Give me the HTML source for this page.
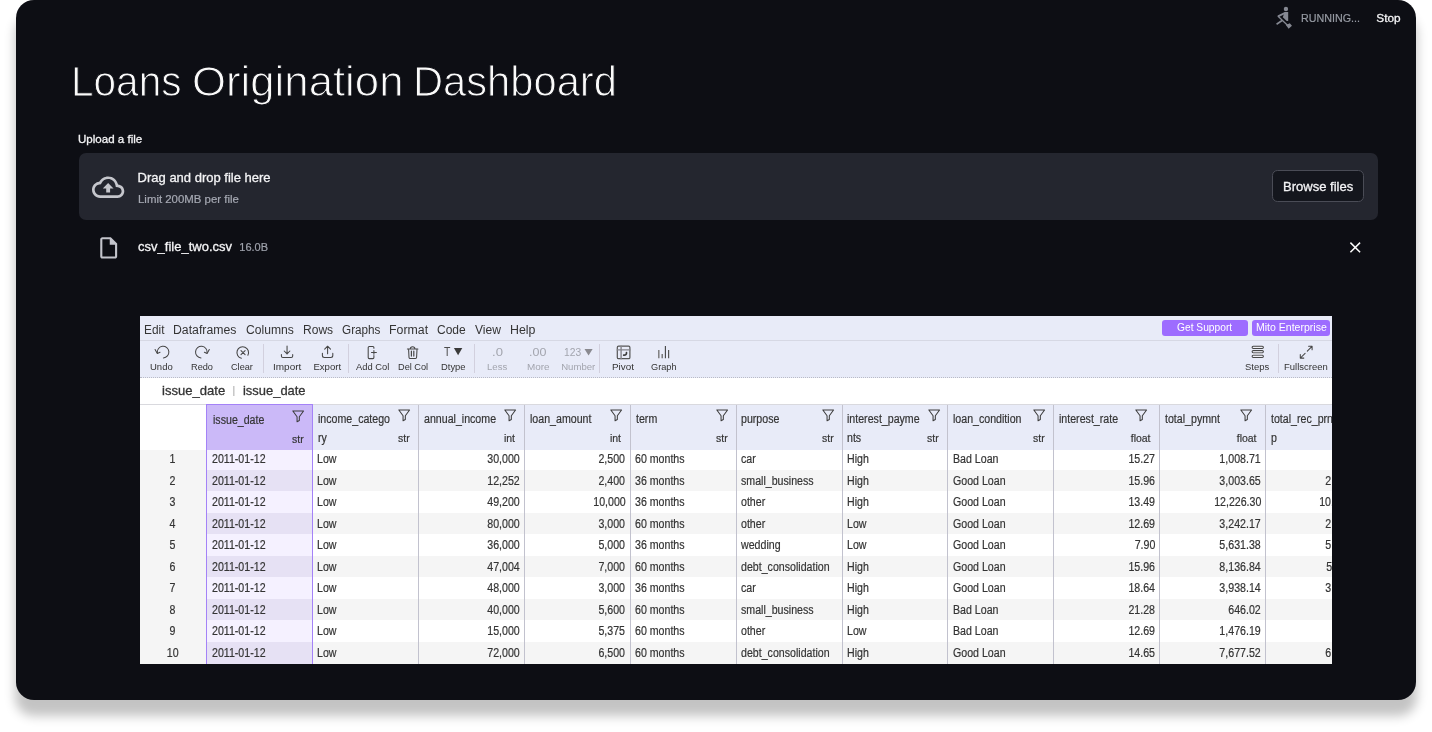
<!DOCTYPE html>
<html lang="en">
<head>
<meta charset="utf-8">
<title>Loans Origination Dashboard</title>
<style>
*{box-sizing:border-box}
html,body{margin:0;padding:0}
body{width:1432px;height:732px;background:#fff;position:relative;overflow:hidden;font-family:"Liberation Sans",sans-serif;color:#fafafa}
.card{position:absolute;left:16px;top:0;width:1400px;height:699.6px;background:#0d0e14;border-radius:18px;box-shadow:0 15.5px 11px .5px rgba(0,0,0,.235)}
.root{position:absolute;left:0;top:0;width:1432px;height:732px;will-change:transform}
.abs{position:absolute;white-space:nowrap}
h1{position:absolute;left:0;margin:0;padding:0;font-weight:400;font-size:42.6px;line-height:55px;white-space:nowrap;color:#fafafa;-webkit-text-stroke:1px #0d0e14}
h1 span{display:inline-block;transform-origin:0 50%}
.t{position:absolute;white-space:nowrap;margin:0;padding:0;transform-origin:0 50%}
.drop{position:absolute;left:79px;top:153.2px;width:1298.8px;height:67.3px;background:#24262f;border-radius:7px}
.btn{position:absolute;left:1272.2px;top:170.4px;width:91.8px;height:32px;border:1px solid #4a4c56;border-radius:5.5px;background:#14161d}

/* mito */
.mito{position:absolute;left:140px;top:316px;width:1192px;height:348px;background:#fff;overflow:hidden;color:#343434}
.hn,.hn2,.ht,.c,.ix{-webkit-text-stroke:.2px #343434}
.menubar{position:absolute;left:0;top:0;width:100%;height:25px;background:#e8ebf8;border-bottom:1px solid #d6d8e4}
.pill{position:absolute;top:4px;height:15.5px;border-radius:3px;background:#9d6cff}
.toolbar{position:absolute;left:0;top:25px;width:100%;height:37px;background:#e8ebf8;border-bottom:1px dotted #b9bbc6}
.ic{position:absolute;overflow:visible}
.sep{position:absolute;top:28.4px;width:1px;height:29px;background:#d2d0de}
.fbar{position:absolute;left:0;top:62px;width:100%;height:27px;background:#fff;border-bottom:1px solid #d9d9de}
.hc{position:absolute;top:88.7px;height:45.1px;background:#e8ebf8;overflow:hidden;z-index:2}
.hcb{position:absolute;left:0;top:88.7px;width:66.6px;height:45.1px;background:#fff;z-index:2}
.hc.sel{background:#cbb9f8}
.hn,.hn2,.ht{position:absolute;font-size:12px;line-height:16px;color:#343434;white-space:nowrap;transform:scaleX(.885)}
.hn{left:5.4px;top:6.3px;transform-origin:0 50%}
.hn2{left:5.4px;top:25.4px;transform-origin:0 50%}
.ht{right:8.8px;top:25.2px;font-size:11.4px;transform:scaleX(.92);transform-origin:100% 50%}
.flt{position:absolute;right:8px;top:4.1px;width:12.4px;height:12.4px;overflow:visible}
.flt.f{right:12.8px}
.hc.sel .hn,.hc.sel .ht,.hc.sel .flt{margin-top:1px}
.hc.sel .hn{margin-left:.9px}
.row{position:absolute;left:0;width:100%;overflow:hidden}
.row.odd{background:#fff}
.row.even{background:#f5f5f5}
.ixb{position:absolute;left:0;top:0;width:66.6px;height:100%;background:#f5f5f5}
.cselb{position:absolute;top:0;height:100%}
.ix{position:absolute;left:0;width:66.6px;height:14px;text-align:center;font-size:12px;line-height:14px;color:#343434;padding-right:2px}
.c{position:absolute;height:14px;font-size:12px;line-height:14px;color:#343434;white-space:nowrap;overflow:hidden}
.c span,.ix span{display:inline-block;transform:scaleX(.885)}
.c.l{text-align:left;padding-left:4.8px}
.c.s1{padding-left:5.6px}
.c.l span{transform-origin:0 50%}
.c.r{text-align:right;padding-right:4.7px}
.c.r span{transform-origin:100% 50%}
.row.odd .cselb{background:#f5f1ff}
.row.even .cselb{background:#e6e1f4}
.vb{position:absolute;top:88.7px;width:1px;height:260px;background:#c2c2ce;z-index:3}
.selb{z-index:4;position:absolute;left:66.2px;top:88.4px;width:106.7px;height:261px;border:1.5px solid #a482f7;border-bottom:0}
</style>
</head>
<body>
<div class="root">
<div class="card"></div>

<!-- status -->
<svg class="abs" style="left:1268px;top:2px" width="32" height="32" viewBox="0 0 732 732"><g fill="#858892" stroke="#858892" stroke-linecap="butt"><circle cx="410" cy="160" r="50" stroke="none"/><path d="M383 228H462V436H428L338 350Z" stroke="none"/><path d="M392 250L228 328" stroke-width="42" fill="none"/><path d="M225 322L470 556" stroke-width="30" fill="none"/><path d="M410 528L498 488L548 542L472 614Z" stroke="none"/><path d="M196 508L322 424" stroke-width="38" fill="none"/></g></svg>

<div class="drop"></div>
<svg class="abs" style="left:92.3px;top:170.7px" width="32.3" height="32.3" viewBox="0 0 24 24"><path fill="#c5c6cc" d="M19.35 10.04C18.67 6.59 15.64 4 12 4 9.11 4 6.6 5.64 5.35 8.04 2.34 8.36 0 10.91 0 14c0 3.310 2.690 6 6 6h13c2.760 0 5-2.240 5-5 0-2.640-2.050-4.780-4.650-4.960zM19 18H6c-2.210 0-4-1.790-4-4 0-2.050 1.530-3.760 3.560-3.970l1.070-.11.5-.95C8.080 7.140 9.940 6 12 6c2.620 0 4.880 1.860 5.390 4.430l.3 1.500 1.530.11c1.560.1 2.780 1.410 2.780 2.960 0 1.650-1.350 3-3 3zM8 13h2.550v3h2.900v-3H16l-4-4z"/></svg>
<div class="btn"></div>
<h1 style="top:54px"><span style="margin-left:71.23px;transform:scaleX(0.9523)">Loans</span> <span style="margin-left:-7.38px;transform:scaleX(1.0267)">Origination</span> <span style="margin-left:3.55px;transform:scaleX(0.9784)">Dashboard</span></h1>
<div class="t" style="left:78.09px;top:132px;font-size:11.4px;line-height:15px;transform:scaleX(1.0139);color:#f4f4f6;-webkit-text-stroke:.3px #f4f4f6">Upload a file</div>
<div class="t" style="left:137.60px;top:169px;font-size:13px;line-height:17px;color:#f4f4f6;-webkit-text-stroke:.3px #f4f4f6">Drag and drop file here</div>
<div class="t" style="left:137.71px;top:191px;font-size:11.6px;line-height:15px;transform:scaleX(0.9846);color:#a6a9b3;-webkit-text-stroke:.2px #a6a9b3">Limit 200MB per file</div>
<div class="t" style="left:1282.72px;top:178px;font-size:13.3px;line-height:17px;transform:scaleX(0.9794);color:#f4f4f6;-webkit-text-stroke:.3px #f4f4f6">Browse files</div>
<div class="t" style="left:138.10px;top:238px;font-size:13px;line-height:17px;color:#f4f4f6;-webkit-text-stroke:.3px #f4f4f6">csv_file_two.csv</div>
<div class="t" style="left:239.30px;top:240px;font-size:11px;line-height:14px;color:#9ea1ab;-webkit-text-stroke:.2px #9ea1ab">16.0B</div>
<div class="t" style="left:1300.88px;top:11px;font-size:11.8px;line-height:15px;transform:scaleX(0.9092);color:#969aa3;-webkit-text-stroke:.2px #969aa3">RUNNING...</div>
<div class="t" style="left:1376.30px;top:11px;font-size:11.8px;line-height:15px;color:#f4f4f6;-webkit-text-stroke:.3px #f4f4f6">Stop</div>

<svg class="abs" style="left:95.6px;top:235.100px" width="25.400" height="25.700" viewBox="0 0 24 24" preserveAspectRatio="none"><path fill="#c3c4cb" d="M14 2H6c-1.100 0-1.990.9-1.990 2L4 20c0 1.100.89 2 1.990 2H18c1.100 0 2-.9 2-2V8l-6-6zM6 20V4h7v5h5v11H6z"/></svg>
<svg class="abs" style="left:1349px;top:241.200px" width="12.6" height="12.6" viewBox="0 0 12.6 12.6"><path d="M1.400 1.600l9.700 9.700M11.100 1.600l-9.700 9.700" stroke="#fafafa" stroke-width="1.500" fill="none"/></svg>

<div class="mito">
<div class="menubar"></div>
<div class="pill" style="left:1021.7px;width:86px"></div>
<div class="pill" style="left:1111.8px;width:78.4px"></div>
<div class="toolbar"></div>
<div class="fbar"></div>
<div class="t" style="left:3.55px;top:6px;font-size:12.5px;line-height:16px;transform:scaleX(0.9479);color:#343434;">Edit</div>
<div class="t" style="left:33.22px;top:6px;font-size:12.5px;line-height:16px;transform:scaleX(0.9817);color:#343434;">Dataframes</div>
<div class="t" style="left:105.72px;top:6px;font-size:12.5px;line-height:16px;transform:scaleX(0.9695);color:#343434;">Columns</div>
<div class="t" style="left:162.64px;top:6px;font-size:12.5px;line-height:16px;transform:scaleX(0.9629);color:#343434;">Rows</div>
<div class="t" style="left:202.14px;top:6px;font-size:12.5px;line-height:16px;transform:scaleX(0.9389);color:#343434;">Graphs</div>
<div class="t" style="left:249.21px;top:6px;font-size:12.5px;line-height:16px;transform:scaleX(0.9866);color:#343434;">Format</div>
<div class="t" style="left:297.42px;top:6px;font-size:12.5px;line-height:16px;transform:scaleX(0.9606);color:#343434;">Code</div>
<div class="t" style="left:335.20px;top:6px;font-size:12.5px;line-height:16px;transform:scaleX(0.9651);color:#343434;">View</div>
<div class="t" style="left:370.11px;top:6px;font-size:12.5px;line-height:16px;transform:scaleX(0.9894);color:#343434;">Help</div>
<div class="t" style="left:1037.14px;top:4px;font-size:11.0px;line-height:14px;transform:scaleX(0.9293);color:#fff;">Get Support</div>
<div class="t" style="left:1115.54px;top:4px;font-size:11.0px;line-height:14px;transform:scaleX(0.9566);color:#fff;">Mito Enterprise</div>
<div class="t" style="left:22.21px;top:66px;font-size:13.2px;line-height:17px;transform:scaleX(0.9903);color:#343434;-webkit-text-stroke:.3px #343434">issue_date</div>
<div class="t" style="left:92.60px;top:67px;font-size:10.5px;line-height:14px;color:#a2a2a2;">|</div>
<div class="t" style="left:102.72px;top:66px;font-size:13.2px;line-height:17px;transform:scaleX(0.9807);color:#343434;-webkit-text-stroke:.3px #343434">issue_date</div>
<div class="t" style="left:10.01px;top:45px;font-size:9.6px;line-height:12px;transform:scaleX(0.9904);color:#343434;">Undo</div>
<div class="t" style="left:50.93px;top:45px;font-size:9.6px;line-height:12px;transform:scaleX(0.9584);color:#343434;">Redo</div>
<div class="t" style="left:91.42px;top:45px;font-size:9.6px;line-height:12px;transform:scaleX(0.9535);color:#343434;">Clear</div>
<div class="t" style="left:132.67px;top:45px;font-size:9.6px;line-height:12px;transform:scaleX(1.0403);color:#343434;">Import</div>
<div class="t" style="left:173.40px;top:45px;font-size:9.6px;line-height:12px;color:#343434;">Export</div>
<div class="t" style="left:215.90px;top:45px;font-size:9.6px;line-height:12px;transform:scaleX(0.9755);color:#343434;">Add Col</div>
<div class="t" style="left:257.63px;top:45px;font-size:9.6px;line-height:12px;transform:scaleX(0.9587);color:#343434;">Del Col</div>
<div class="t" style="left:300.72px;top:45px;font-size:9.6px;line-height:12px;transform:scaleX(0.9776);color:#343434;">Dtype</div>
<div class="t" style="left:347.40px;top:45px;font-size:9.6px;line-height:12px;transform:scaleX(0.9959);color:#a3a5ae;">Less</div>
<div class="t" style="left:386.88px;top:45px;font-size:9.6px;line-height:12px;transform:scaleX(1.0320);color:#a3a5ae;">More</div>
<div class="t" style="left:421.20px;top:45px;font-size:9.6px;line-height:12px;color:#a3a5ae;">Number</div>
<div class="t" style="left:472.18px;top:45px;font-size:9.6px;line-height:12px;transform:scaleX(1.0304);color:#343434;">Pivot</div>
<div class="t" style="left:511.22px;top:45px;font-size:9.6px;line-height:12px;transform:scaleX(0.9556);color:#343434;">Graph</div>
<div class="t" style="left:1105.31px;top:45px;font-size:9.6px;line-height:12px;transform:scaleX(0.9854);color:#343434;">Steps</div>
<div class="t" style="left:1144.21px;top:45px;font-size:9.6px;line-height:12px;transform:scaleX(0.9874);color:#343434;">Fullscreen</div>
<div class="t" style="left:303.73px;top:28px;font-size:12.2px;line-height:16px;transform:scaleX(0.8571);color:#4c4c4c;">T</div>
<div class="t" style="left:351.89px;top:29px;font-size:10.6px;line-height:14px;transform:scaleX(1.2326);color:#a3a5ae;">.0</div>
<div class="t" style="left:389.14px;top:29px;font-size:10.6px;line-height:14px;transform:scaleX(1.1756);color:#a3a5ae;">.00</div>
<div class="t" style="left:424.12px;top:29px;font-size:10.6px;line-height:14px;transform:scaleX(0.9703);color:#a3a5ae;">123</div>

<!-- toolbar icons: one svg in widget coordinates -->
<svg class="ic" style="left:0;top:0" width="1192" height="70" viewBox="140 316 1192 70">
<g fill="none" stroke="#464646" stroke-width="1.050" stroke-linecap="round" stroke-linejoin="round">
<!-- undo -->
<path d="M157.300 352.800A5.800 5.800 0 1 1 163.400 357.900"/><path d="M155.100 349.500L157.300 353.400L160 352.300"/>
<!-- redo -->
<path d="M207.100 352.800A5.800 5.800 0 1 0 201 357.900"/><path d="M209.300 349.500L207.100 353.400L204.400 352.300"/>
<!-- clear -->
<path d="M247.900 355.200A5.800 5.800 0 1 0 241.400 358.200"/><path d="M241 350.600L245.100 354.700M245.100 350.600L241 354.700"/>
<!-- import -->
<path d="M287.050 346V353.900M284.200 351L287.050 353.900L289.900 351"/><path d="M281.400 354.400V356A1.500 1.500 0 0 0 282.900 357.500H291.200A1.500 1.500 0 0 0 292.700 356V354.400"/>
<!-- export -->
<path d="M327.600 353.700V346.300M324.700 349.100L327.600 346.200L330.500 349.100"/><path d="M322.400 353.300V355.500A2 2 0 0 0 324.400 357.500H330.800A2 2 0 0 0 332.800 355.500V353.300"/>
<!-- add col -->
<path d="M373.900 348.200V347.400A1 1 0 0 0 372.900 346.400H369.200A1 1 0 0 0 368.200 347.400V357.600A1 1 0 0 0 369.200 358.600H372.900A1 1 0 0 0 373.900 357.600V355.600"/><path d="M371.500 352.400H376.400M373.900 350.500V354.300"/>
<!-- del col -->
<path d="M407.400 349H417.900M410.300 348.800C410.300 346 414.900 346 414.900 348.800"/><path d="M408.600 349.400L409 357.200A1.200 1.200 0 0 0 410.200 358.400H415.400A1.200 1.200 0 0 0 416.600 357.200L417 349.400"/><path d="M411.400 351V356.100M413.800 351V356.100" stroke-width="1.200"/>
<!-- pivot -->
<rect x="617.300" y="346.200" width="12.600" height="12.500" rx="1.300" stroke="#555" stroke-width="1.200"/><path d="M617.300 349.900H629.900M621.100 346.200V358.700" stroke="#85858c" stroke-width="1.400"/><path d="M623.700 355.100Q626.600 355.400 626.500 352.700" stroke="#3c3c3c" stroke-width="1.700"/>
<!-- graph -->
<path d="M658.800 350.100V358.300" stroke="#777" stroke-width="1.400" stroke-linecap="butt"/><path d="M662.200 353.900V358.300" stroke="#666" stroke-width="1.300" stroke-linecap="butt"/><path d="M665.400 346V358.300" stroke="#444" stroke-width="1.100" stroke-linecap="butt"/><path d="M668.600 350.100V358.300" stroke="#555" stroke-width="1.200" stroke-linecap="butt"/>
<!-- steps -->
<rect x="1252.100" y="346.200" width="11.300" height="2.300" rx="1.150" fill="#f0f0f6"/><rect x="1252.100" y="350.400" width="11.300" height="2.300" rx="1.150" fill="#d8d8de"/><rect x="1252.100" y="355.200" width="11.300" height="2.300" rx="1.150" fill="#f0f0f6"/><rect x="1253" y="352.700" width="9.500" height="2.500" stroke="none" fill="#c4c4ca"/>
<!-- fullscreen -->
<path d="M1307.300 351.100L1312 346.400M1308.600 346.300H1312.100V349.800M1305.100 353.300L1300.400 358M1300.300 354.600V358.100H1303.800"/>
</g>
<polygon points="453.900,348.100 462.300,348.100 458.100,355.200" fill="#3a3a3a"/>
<polygon points="584.500,348.900 592.600,348.900 588.550,355.400" fill="#8a8a90"/>
</svg>
<div class="sep" style="left:123px"></div><div class="sep" style="left:208.400px"></div><div class="sep" style="left:333.500px"></div><div class="sep" style="left:459.400px"></div><div class="sep" style="left:1138px"></div>

<div class="hcb"></div>
<div class="hc sel" style="left:66.6px;width:105.9px"><span class="hn">issue_date</span><svg class="flt" viewBox="0 0 12 12"><path d="M0.8 1h10.4L7.1 6.6v3.6L4.9 11.3V6.6z" fill="none" stroke="#3c3c3c" stroke-width="1" stroke-linejoin="round"/></svg><span class="hn2"></span><span class="ht">str</span></div>
<div class="hc" style="left:172.5px;width:105.9px"><span class="hn">income_catego</span><svg class="flt" viewBox="0 0 12 12"><path d="M0.8 1h10.4L7.1 6.6v3.6L4.9 11.3V6.6z" fill="none" stroke="#3c3c3c" stroke-width="1" stroke-linejoin="round"/></svg><span class="hn2">ry</span><span class="ht">str</span></div>
<div class="hc" style="left:278.4px;width:105.9px"><span class="hn">annual_income</span><svg class="flt" viewBox="0 0 12 12"><path d="M0.8 1h10.4L7.1 6.6v3.6L4.9 11.3V6.6z" fill="none" stroke="#3c3c3c" stroke-width="1" stroke-linejoin="round"/></svg><span class="hn2"></span><span class="ht">int</span></div>
<div class="hc" style="left:384.3px;width:105.9px"><span class="hn">loan_amount</span><svg class="flt" viewBox="0 0 12 12"><path d="M0.8 1h10.4L7.1 6.6v3.6L4.9 11.3V6.6z" fill="none" stroke="#3c3c3c" stroke-width="1" stroke-linejoin="round"/></svg><span class="hn2"></span><span class="ht">int</span></div>
<div class="hc" style="left:490.2px;width:105.9px"><span class="hn">term</span><svg class="flt" viewBox="0 0 12 12"><path d="M0.8 1h10.4L7.1 6.6v3.6L4.9 11.3V6.6z" fill="none" stroke="#3c3c3c" stroke-width="1" stroke-linejoin="round"/></svg><span class="hn2"></span><span class="ht">str</span></div>
<div class="hc" style="left:596.1px;width:105.9px"><span class="hn">purpose</span><svg class="flt" viewBox="0 0 12 12"><path d="M0.8 1h10.4L7.1 6.6v3.6L4.9 11.3V6.6z" fill="none" stroke="#3c3c3c" stroke-width="1" stroke-linejoin="round"/></svg><span class="hn2"></span><span class="ht">str</span></div>
<div class="hc" style="left:702.0px;width:105.9px"><span class="hn">interest_payme</span><svg class="flt" viewBox="0 0 12 12"><path d="M0.8 1h10.4L7.1 6.6v3.6L4.9 11.3V6.6z" fill="none" stroke="#3c3c3c" stroke-width="1" stroke-linejoin="round"/></svg><span class="hn2">nts</span><span class="ht">str</span></div>
<div class="hc" style="left:807.9px;width:105.9px"><span class="hn">loan_condition</span><svg class="flt" viewBox="0 0 12 12"><path d="M0.8 1h10.4L7.1 6.6v3.6L4.9 11.3V6.6z" fill="none" stroke="#3c3c3c" stroke-width="1" stroke-linejoin="round"/></svg><span class="hn2"></span><span class="ht">str</span></div>
<div class="hc" style="left:913.8px;width:105.9px"><span class="hn">interest_rate</span><svg class="flt f" viewBox="0 0 12 12"><path d="M0.8 1h10.4L7.1 6.6v3.6L4.9 11.3V6.6z" fill="none" stroke="#3c3c3c" stroke-width="1" stroke-linejoin="round"/></svg><span class="hn2"></span><span class="ht">float</span></div>
<div class="hc" style="left:1019.7px;width:105.9px"><span class="hn">total_pymnt</span><svg class="flt f" viewBox="0 0 12 12"><path d="M0.8 1h10.4L7.1 6.6v3.6L4.9 11.3V6.6z" fill="none" stroke="#3c3c3c" stroke-width="1" stroke-linejoin="round"/></svg><span class="hn2"></span><span class="ht">float</span></div>
<div class="hc" style="left:1125.6px;width:105.9px"><span class="hn">total_rec_prn</span><span class="hn2">p</span><span class="ht">float</span></div>
<div class="row odd" style="top:132.50px;height:21.58px"><div class="ixb"></div><div class="cselb" style="left:66.6px;width:105.9px"></div><div class="ix" style="top:3.50px"><span>1</span></div><div class="c l s1" style="left:66.6px;top:3.50px;width:105.9px"><span>2011-01-12</span></div><div class="c l" style="left:172.5px;top:3.50px;width:105.9px"><span>Low</span></div><div class="c r" style="left:278.4px;top:3.50px;width:105.9px"><span>30,000</span></div><div class="c r" style="left:384.3px;top:3.50px;width:105.9px"><span>2,500</span></div><div class="c l" style="left:490.2px;top:3.50px;width:105.9px"><span>60 months</span></div><div class="c l" style="left:596.1px;top:3.50px;width:105.9px"><span>car</span></div><div class="c l" style="left:702.0px;top:3.50px;width:105.9px"><span>High</span></div><div class="c l" style="left:807.9px;top:3.50px;width:105.9px"><span>Bad Loan</span></div><div class="c r" style="left:913.8px;top:3.50px;width:105.9px"><span>15.27</span></div><div class="c r" style="left:1019.7px;top:3.50px;width:105.9px"><span>1,008.71</span></div><div class="c r" style="left:1125.6px;top:3.50px;width:105.9px"><span>456.46</span></div></div>
<div class="row even" style="top:153.98px;height:21.58px"><div class="ixb"></div><div class="cselb" style="left:66.6px;width:105.9px"></div><div class="ix" style="top:4.02px"><span>2</span></div><div class="c l s1" style="left:66.6px;top:4.02px;width:105.9px"><span>2011-01-12</span></div><div class="c l" style="left:172.5px;top:4.02px;width:105.9px"><span>Low</span></div><div class="c r" style="left:278.4px;top:4.02px;width:105.9px"><span>12,252</span></div><div class="c r" style="left:384.3px;top:4.02px;width:105.9px"><span>2,400</span></div><div class="c l" style="left:490.2px;top:4.02px;width:105.9px"><span>36 months</span></div><div class="c l" style="left:596.1px;top:4.02px;width:105.9px"><span>small_business</span></div><div class="c l" style="left:702.0px;top:4.02px;width:105.9px"><span>High</span></div><div class="c l" style="left:807.9px;top:4.02px;width:105.9px"><span>Good Loan</span></div><div class="c r" style="left:913.8px;top:4.02px;width:105.9px"><span>15.96</span></div><div class="c r" style="left:1019.7px;top:4.02px;width:105.9px"><span>3,003.65</span></div><div class="c r" style="left:1125.6px;top:4.02px;width:105.9px"><span>2,400.00</span></div></div>
<div class="row odd" style="top:175.46px;height:21.58px"><div class="ixb"></div><div class="cselb" style="left:66.6px;width:105.9px"></div><div class="ix" style="top:3.54px"><span>3</span></div><div class="c l s1" style="left:66.6px;top:3.54px;width:105.9px"><span>2011-01-12</span></div><div class="c l" style="left:172.5px;top:3.54px;width:105.9px"><span>Low</span></div><div class="c r" style="left:278.4px;top:3.54px;width:105.9px"><span>49,200</span></div><div class="c r" style="left:384.3px;top:3.54px;width:105.9px"><span>10,000</span></div><div class="c l" style="left:490.2px;top:3.54px;width:105.9px"><span>36 months</span></div><div class="c l" style="left:596.1px;top:3.54px;width:105.9px"><span>other</span></div><div class="c l" style="left:702.0px;top:3.54px;width:105.9px"><span>High</span></div><div class="c l" style="left:807.9px;top:3.54px;width:105.9px"><span>Good Loan</span></div><div class="c r" style="left:913.8px;top:3.54px;width:105.9px"><span>13.49</span></div><div class="c r" style="left:1019.7px;top:3.54px;width:105.9px"><span>12,226.30</span></div><div class="c r" style="left:1125.6px;top:3.54px;width:105.9px"><span>10,000.00</span></div></div>
<div class="row even" style="top:196.94px;height:21.58px"><div class="ixb"></div><div class="cselb" style="left:66.6px;width:105.9px"></div><div class="ix" style="top:4.06px"><span>4</span></div><div class="c l s1" style="left:66.6px;top:4.06px;width:105.9px"><span>2011-01-12</span></div><div class="c l" style="left:172.5px;top:4.06px;width:105.9px"><span>Low</span></div><div class="c r" style="left:278.4px;top:4.06px;width:105.9px"><span>80,000</span></div><div class="c r" style="left:384.3px;top:4.06px;width:105.9px"><span>3,000</span></div><div class="c l" style="left:490.2px;top:4.06px;width:105.9px"><span>60 months</span></div><div class="c l" style="left:596.1px;top:4.06px;width:105.9px"><span>other</span></div><div class="c l" style="left:702.0px;top:4.06px;width:105.9px"><span>Low</span></div><div class="c l" style="left:807.9px;top:4.06px;width:105.9px"><span>Good Loan</span></div><div class="c r" style="left:913.8px;top:4.06px;width:105.9px"><span>12.69</span></div><div class="c r" style="left:1019.7px;top:4.06px;width:105.9px"><span>3,242.17</span></div><div class="c r" style="left:1125.6px;top:4.06px;width:105.9px"><span>2,233.10</span></div></div>
<div class="row odd" style="top:218.42px;height:21.58px"><div class="ixb"></div><div class="cselb" style="left:66.6px;width:105.9px"></div><div class="ix" style="top:3.58px"><span>5</span></div><div class="c l s1" style="left:66.6px;top:3.58px;width:105.9px"><span>2011-01-12</span></div><div class="c l" style="left:172.5px;top:3.58px;width:105.9px"><span>Low</span></div><div class="c r" style="left:278.4px;top:3.58px;width:105.9px"><span>36,000</span></div><div class="c r" style="left:384.3px;top:3.58px;width:105.9px"><span>5,000</span></div><div class="c l" style="left:490.2px;top:3.58px;width:105.9px"><span>36 months</span></div><div class="c l" style="left:596.1px;top:3.58px;width:105.9px"><span>wedding</span></div><div class="c l" style="left:702.0px;top:3.58px;width:105.9px"><span>Low</span></div><div class="c l" style="left:807.9px;top:3.58px;width:105.9px"><span>Good Loan</span></div><div class="c r" style="left:913.8px;top:3.58px;width:105.9px"><span>7.90</span></div><div class="c r" style="left:1019.7px;top:3.58px;width:105.9px"><span>5,631.38</span></div><div class="c r" style="left:1125.6px;top:3.58px;width:105.9px"><span>5,000.00</span></div></div>
<div class="row even" style="top:239.90px;height:21.58px"><div class="ixb"></div><div class="cselb" style="left:66.6px;width:105.9px"></div><div class="ix" style="top:4.10px"><span>6</span></div><div class="c l s1" style="left:66.6px;top:4.10px;width:105.9px"><span>2011-01-12</span></div><div class="c l" style="left:172.5px;top:4.10px;width:105.9px"><span>Low</span></div><div class="c r" style="left:278.4px;top:4.10px;width:105.9px"><span>47,004</span></div><div class="c r" style="left:384.3px;top:4.10px;width:105.9px"><span>7,000</span></div><div class="c l" style="left:490.2px;top:4.10px;width:105.9px"><span>60 months</span></div><div class="c l" style="left:596.1px;top:4.10px;width:105.9px"><span>debt_consolidation</span></div><div class="c l" style="left:702.0px;top:4.10px;width:105.9px"><span>High</span></div><div class="c l" style="left:807.9px;top:4.10px;width:105.9px"><span>Good Loan</span></div><div class="c r" style="left:913.8px;top:4.10px;width:105.9px"><span>15.96</span></div><div class="c r" style="left:1019.7px;top:4.10px;width:105.9px"><span>8,136.84</span></div><div class="c r" style="left:1125.6px;top:4.10px;width:105.9px"><span>5,110.85</span></div></div>
<div class="row odd" style="top:261.38px;height:21.58px"><div class="ixb"></div><div class="cselb" style="left:66.6px;width:105.9px"></div><div class="ix" style="top:3.62px"><span>7</span></div><div class="c l s1" style="left:66.6px;top:3.62px;width:105.9px"><span>2011-01-12</span></div><div class="c l" style="left:172.5px;top:3.62px;width:105.9px"><span>Low</span></div><div class="c r" style="left:278.4px;top:3.62px;width:105.9px"><span>48,000</span></div><div class="c r" style="left:384.3px;top:3.62px;width:105.9px"><span>3,000</span></div><div class="c l" style="left:490.2px;top:3.62px;width:105.9px"><span>36 months</span></div><div class="c l" style="left:596.1px;top:3.62px;width:105.9px"><span>car</span></div><div class="c l" style="left:702.0px;top:3.62px;width:105.9px"><span>High</span></div><div class="c l" style="left:807.9px;top:3.62px;width:105.9px"><span>Good Loan</span></div><div class="c r" style="left:913.8px;top:3.62px;width:105.9px"><span>18.64</span></div><div class="c r" style="left:1019.7px;top:3.62px;width:105.9px"><span>3,938.14</span></div><div class="c r" style="left:1125.6px;top:3.62px;width:105.9px"><span>3,000.00</span></div></div>
<div class="row even" style="top:282.86px;height:21.58px"><div class="ixb"></div><div class="cselb" style="left:66.6px;width:105.9px"></div><div class="ix" style="top:4.14px"><span>8</span></div><div class="c l s1" style="left:66.6px;top:4.14px;width:105.9px"><span>2011-01-12</span></div><div class="c l" style="left:172.5px;top:4.14px;width:105.9px"><span>Low</span></div><div class="c r" style="left:278.4px;top:4.14px;width:105.9px"><span>40,000</span></div><div class="c r" style="left:384.3px;top:4.14px;width:105.9px"><span>5,600</span></div><div class="c l" style="left:490.2px;top:4.14px;width:105.9px"><span>60 months</span></div><div class="c l" style="left:596.1px;top:4.14px;width:105.9px"><span>small_business</span></div><div class="c l" style="left:702.0px;top:4.14px;width:105.9px"><span>High</span></div><div class="c l" style="left:807.9px;top:4.14px;width:105.9px"><span>Bad Loan</span></div><div class="c r" style="left:913.8px;top:4.14px;width:105.9px"><span>21.28</span></div><div class="c r" style="left:1019.7px;top:4.14px;width:105.9px"><span>646.02</span></div><div class="c r" style="left:1125.6px;top:4.14px;width:105.9px"><span>162.02</span></div></div>
<div class="row odd" style="top:304.34px;height:21.58px"><div class="ixb"></div><div class="cselb" style="left:66.6px;width:105.9px"></div><div class="ix" style="top:3.66px"><span>9</span></div><div class="c l s1" style="left:66.6px;top:3.66px;width:105.9px"><span>2011-01-12</span></div><div class="c l" style="left:172.5px;top:3.66px;width:105.9px"><span>Low</span></div><div class="c r" style="left:278.4px;top:3.66px;width:105.9px"><span>15,000</span></div><div class="c r" style="left:384.3px;top:3.66px;width:105.9px"><span>5,375</span></div><div class="c l" style="left:490.2px;top:3.66px;width:105.9px"><span>60 months</span></div><div class="c l" style="left:596.1px;top:3.66px;width:105.9px"><span>other</span></div><div class="c l" style="left:702.0px;top:3.66px;width:105.9px"><span>Low</span></div><div class="c l" style="left:807.9px;top:3.66px;width:105.9px"><span>Bad Loan</span></div><div class="c r" style="left:913.8px;top:3.66px;width:105.9px"><span>12.69</span></div><div class="c r" style="left:1019.7px;top:3.66px;width:105.9px"><span>1,476.19</span></div><div class="c r" style="left:1125.6px;top:3.66px;width:105.9px"><span>673.48</span></div></div>
<div class="row even" style="top:325.82px;height:22.18px"><div class="ixb"></div><div class="cselb" style="left:66.6px;width:105.9px"></div><div class="ix" style="top:4.18px"><span>10</span></div><div class="c l s1" style="left:66.6px;top:4.18px;width:105.9px"><span>2011-01-12</span></div><div class="c l" style="left:172.5px;top:4.18px;width:105.9px"><span>Low</span></div><div class="c r" style="left:278.4px;top:4.18px;width:105.9px"><span>72,000</span></div><div class="c r" style="left:384.3px;top:4.18px;width:105.9px"><span>6,500</span></div><div class="c l" style="left:490.2px;top:4.18px;width:105.9px"><span>60 months</span></div><div class="c l" style="left:596.1px;top:4.18px;width:105.9px"><span>debt_consolidation</span></div><div class="c l" style="left:702.0px;top:4.18px;width:105.9px"><span>High</span></div><div class="c l" style="left:807.9px;top:4.18px;width:105.9px"><span>Good Loan</span></div><div class="c r" style="left:913.8px;top:4.18px;width:105.9px"><span>14.65</span></div><div class="c r" style="left:1019.7px;top:4.18px;width:105.9px"><span>7,677.52</span></div><div class="c r" style="left:1125.6px;top:4.18px;width:105.9px"><span>6,500.00</span></div></div>
<div class="vb" style="left:172.0px"></div>
<div class="vb" style="left:277.9px"></div>
<div class="vb" style="left:383.8px"></div>
<div class="vb" style="left:489.7px"></div>
<div class="vb" style="left:595.6px"></div>
<div class="vb" style="left:701.5px"></div>
<div class="vb" style="left:807.4px"></div>
<div class="vb" style="left:913.3px"></div>
<div class="vb" style="left:1019.2px"></div>
<div class="vb" style="left:1125.1px"></div>
<div class="selb"></div>
</div>
</div>
</body>
</html>
